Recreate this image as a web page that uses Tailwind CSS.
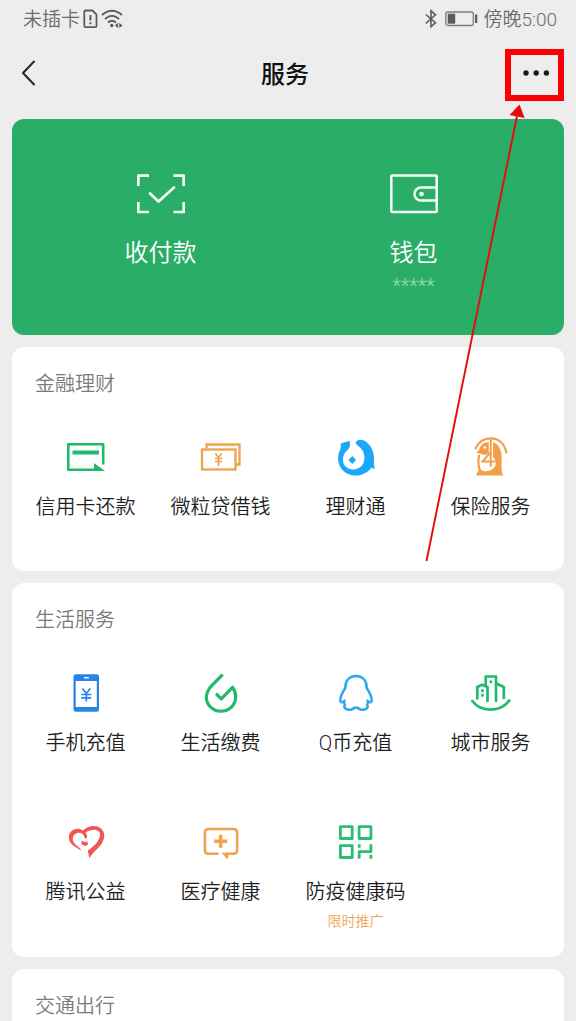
<!DOCTYPE html>
<html lang="zh-CN">
<head>
<meta charset="utf-8">
<meta name="viewport" content="width=device-width, initial-scale=1">
<title>服务</title>
<script src="https://cdn.jsdelivr.net/npm/@tailwindcss/browser@4"></script>
</head>
<body class="bg-[#ededed] font-[Roboto,'Noto_Sans_CJK_SC',sans-serif] text-[#1f1f1f]">
<div class="relative h-screen overflow-hidden">

  <!-- Status bar -->
  <div class="flex h-10 items-center justify-between pl-[23px] pr-[19px] text-[19px] leading-7 text-[#6b6b6b] font-[350]">
    <div class="flex items-center">
      <span>未插卡</span>
      <svg class="mb-[2px] ml-[3px] h-5 w-4" viewBox="0 0 16 20" fill="none" stroke="#5c5c5c" stroke-width="1.8" aria-hidden="true"><path d="M2.500 1.500H9.500L13.500 5.500V17Q13.500 18.200 12.300 18.200H2.500Q1.300 18.200 1.300 17V2.700Q1.300 1.500 2.500 1.500Z"/><path d="M7.400 6V11.500M7.400 13.200V15.200" stroke-width="2"/></svg>
      <svg class="mb-[2px] ml-[2px] h-5 w-6" viewBox="0 0 24 20" fill="none" stroke="#5c5c5c" stroke-width="1.900" aria-hidden="true"><path d="M1 6Q11-2.500 21 6M4 10Q11 3.500 18 10M7 13.500Q11 9.800 15 13.500"/><circle cx="10.800" cy="16.500" r="1.700" fill="#5c5c5c" stroke="none"/><path d="M17.200 13.800V19L13.800 16.400ZM18.300 13.800V19L21.600 16.400Z" fill="#5c5c5c" stroke="none"/></svg>
    </div>
    <div class="flex items-center">
      <svg class="mb-[2px] h-5 w-3" viewBox="0 0 12 20" fill="none" stroke="#5c5c5c" stroke-width="1.600" aria-hidden="true"><path d="M.8 5.500L10.500 13.700L6 17.800V1.700L10.500 5.800L.8 14.500"/></svg>
      <svg class="mb-[2px] ml-2 mr-1 h-5 w-[34px]" viewBox="0 0 34 20" aria-hidden="true"><rect x=".8" y="3" width="27.500" height="13.500" rx="2" fill="none" stroke="#7d7d7d" stroke-width="1.300"/><rect x="2.700" y="4.700" width="7.500" height="10" fill="#5c5c5c"/><rect x="30" y="5.500" width="2.200" height="8.500" fill="#5c5c5c"/></svg>
      <span>傍晚5:00</span>
    </div>
  </div>

  <!-- Navigation bar -->
  <header class="grid h-[70px] grid-cols-3 items-center pl-[6px] pr-3">
    <button type="button" aria-label="返回" class="flex h-10 w-10 items-center pl-[15px]">
      <svg class="mb-[2px] h-7 w-4" viewBox="0 0 16 28" fill="none" stroke="#262626" stroke-width="2" stroke-linecap="round" stroke-linejoin="round" aria-hidden="true"><path d="M13 1.500L2 13L13 24.500"/></svg>
    </button>
    <h1 class="text-center text-2xl font-medium text-[#111]">服务</h1>
    <button type="button" aria-label="更多" class="flex h-[52px] w-[59px] items-center justify-center justify-self-end border-[6px] border-[#fb0007]">
      <svg class="mb-1 ml-[2px] h-2 w-7" viewBox="0 0 28 8" fill="#1a1a1a" aria-hidden="true"><circle cx="4" cy="4" r="2.700"/><circle cx="14.200" cy="4" r="2.700"/><circle cx="24.400" cy="4" r="2.700"/></svg>
    </button>
  </header>

  <main class="mx-3 mt-[9px] flex flex-col gap-3">
    <!-- Payment card -->
    <section class="grid h-[216px] grid-cols-2 rounded-xl bg-[#2aae67] pl-[22px] pr-6 pt-[51px] font-[350] text-white">
      <a href="#" class="flex flex-col items-center">
        <svg class="size-12" viewBox="0 0 48 48" fill="none" stroke="#f2fff6" stroke-width="2.700" stroke-linejoin="round" aria-hidden="true"><path d="M1.300 16V5.700H12M36.500 5.700H46.700V16M46.700 32V42H36.500M12 42H1.300V32"/><path d="M13 23.500L21.500 31.500L37 17.500" stroke-linecap="round"/></svg>
        <span class="mt-[19px] text-2xl">收付款</span>
      </a>
      <a href="#" class="flex flex-col items-center">
        <svg class="size-12" viewBox="0 0 48 48" fill="none" stroke="#f2fff6" stroke-width="2.500" stroke-linejoin="round" aria-hidden="true"><rect x="1.300" y="5.500" width="45.400" height="36.500" rx="1"/><path d="M47 17.500H31A6.500 6.500 0 0 0 31 30.500H47"/><circle cx="31.500" cy="24" r="2.300" fill="#f2fff6" stroke="none"/></svg>
        <span class="mt-[19px] text-2xl">钱包</span>
        <span class="mt-[5px] text-xl leading-6 text-[#9adbb5]">*****</span>
      </a>
    </section>

    <!-- Finance -->
    <section class="rounded-xl bg-white px-[6px] pb-6 pt-[23px]">
      <h2 class="pl-[17px] text-xl font-[350] text-[#7a7a7a]">金融理财</h2>
      <div class="mt-[35px] grid grid-cols-4 gap-y-[35px] text-xl font-[350]">
        <a href="#" class="flex min-h-[114px] flex-col items-center">
          <svg class="size-12" viewBox="0 0 48 48" fill="none" stroke="#1fbb6b" stroke-width="2.600" aria-hidden="true"><path d="M32 36.700H6.300V11.300H41.200V31.500" stroke-linejoin="round"/><path d="M10.500 19.500H37" stroke-width="4"/><path d="M32 30L43 38H32Z" fill="#1fbb6b" stroke="none"/></svg>
          <span class="mt-3 whitespace-nowrap">信用卡还款</span>
        </a>
        <a href="#" class="flex min-h-[114px] flex-col items-center">
          <svg class="size-12" viewBox="0 0 48 48" fill="none" stroke="#eea24b" stroke-width="2.300" aria-hidden="true"><rect x="5" y="16.500" width="33.500" height="20"/><path d="M9.500 15V11.500H42.500V31.500H39"/><path d="M18.300 20.500L21.500 24.500L24.700 20.500M17.800 25.500H25.200M17.800 28.500H25.200M21.500 24.500V33" stroke-width="1.700"/></svg>
          <span class="mt-3 whitespace-nowrap">微粒贷借钱</span>
        </a>
        <a href="#" class="flex min-h-[114px] flex-col items-center">
          <svg class="size-12" viewBox="0 0 48 48" fill="#1ba7fb" aria-hidden="true"><path d="M17.500 7.700C14 9.500 11 8.700 8.500 11C9.300 13 9 15 8 17C5 23 5.500 31 10 36.500C15 42.500 24 44 31 41C35 39.500 38 37 39.500 34.500L42.800 36.500L41.800 31C43 24 41 15 36 10.500C32 6 25.500 5.500 23.700 9.500C24 12.500 28.500 13.500 30.500 17.500C33.500 23 33 29 29.500 33C25.500 37.500 17 37.500 13 33C9.800 29 10.500 22 14 18.500C17 16 19 13.500 17.500 7.700Z"/><path d="M20.300 23L24 27L20.300 31L16.500 27Z"/></svg>
          <span class="mt-3 whitespace-nowrap">理财通</span>
        </a>
        <a href="#" class="flex min-h-[114px] flex-col items-center">
          <svg class="size-12" viewBox="0 0 48 48" fill="none" stroke="#f1a047" stroke-width="2.200" stroke-linecap="round" aria-hidden="true"><path d="M8.500 15.500C11.500 8.500 17.500 5.300 24 5.300C32 5.300 37.500 11 39.500 19.500"/><path d="M8.500 19.500C11 18.500 12 17 13 14.500C15 10.500 18 9.300 21.800 9.300V19.500C20 22 16.500 22.800 13 20.500Z" fill="#f1a047" stroke="none"/><circle cx="17.800" cy="14.500" r="1.300" fill="#fff" stroke="none"/><path d="M26 9.300C31.500 11 35 17 34.700 25C34.600 32 34 37 36 42.500H9C10 39.500 11.500 38 12.500 36.300C17 39.500 25 38.500 28 33.500C29.500 30 29 27 26 24Z" fill="#f1a047" stroke="none"/><path d="M12 22.500C11.200 27 11.200 33 13 37.500"/><path d="M23.800 6V33M15 28.500H28M23.800 19L16 28" stroke-width="2"/></svg>
          <span class="mt-3 whitespace-nowrap">保险服务</span>
        </a>
      </div>
    </section>

    <!-- Daily life -->
    <section class="rounded-xl bg-white px-[6px] pb-6 pt-[23px]">
      <h2 class="pl-[17px] text-xl font-[350] text-[#7a7a7a]">生活服务</h2>
      <div class="mt-[35px] grid grid-cols-4 gap-y-[35px] text-xl font-[350]">
        <a href="#" class="flex min-h-[114px] flex-col items-center">
          <svg class="size-12" viewBox="0 0 48 48" fill="none" stroke="#2684e4" stroke-width="2" aria-hidden="true"><rect x="11.500" y="5.300" width="25.500" height="37.400" rx="2.500" fill="#2684e4" stroke="none"/><path d="M13.700 12H34.800V38H13.700Z" fill="#fff" stroke="none"/><path d="M22 8.700H26.800" stroke="#fff" stroke-width="1.500"/><path d="M20.300 19.500L24.300 24.500L28.300 19.500M19.300 25.500H29.300M19.300 28.800H29.300M24.300 24.500V32.500" stroke-width="1.700"/></svg>
          <span class="mt-3 whitespace-nowrap">手机充值</span>
        </a>
        <a href="#" class="flex min-h-[114px] flex-col items-center">
          <svg class="size-12" viewBox="0 0 48 48" fill="none" stroke="#1fbb6b" stroke-width="3.200" stroke-linejoin="round" aria-hidden="true"><path d="M25.500 5.500C19 13.500 9.300 19 9.300 28A14.700 14.200 0 0 0 38.700 28C38.700 24 37.500 21 35.500 18.300L24.300 29.800L19 24.700"/></svg>
          <span class="mt-3 whitespace-nowrap">生活缴费</span>
        </a>
        <a href="#" class="flex min-h-[114px] flex-col items-center">
          <svg class="size-12" viewBox="0 0 48 48" fill="none" stroke="#2ba7f1" stroke-width="2.500" stroke-linejoin="round" stroke-linecap="round" aria-hidden="true"><path d="M24 7C17 7 13.300 12 13.300 19C11 22.500 8.200 27 8.300 31C8.500 34 10.500 34 12.500 31.500M24 7C31 7 34.700 12 34.700 19C37 22.500 39.800 27 39.700 31C39.500 34 37.500 34 35.500 31.500M11.800 33C13 35 13.500 35.500 12.300 37.500C12.500 41.500 21 41.500 22 38.800H26C27 41.500 35.500 41.500 35.700 37.500C34.500 35.500 35 35 36.200 33"/></svg>
          <span class="mt-3 whitespace-nowrap">Q币充值</span>
        </a>
        <a href="#" class="flex min-h-[114px] flex-col items-center">
          <svg class="size-12" viewBox="0 0 48 48" fill="none" stroke="#1fbb6b" stroke-width="2.700" stroke-linecap="round" stroke-linejoin="round" aria-hidden="true"><path d="M5.300 32C14 43.500 33.500 43.500 42.300 31.500"/><path d="M10.300 29.500V18L15 15.700L20.500 18V32M18.700 15.500V7.500H29V32M29.500 14.500L36.800 18V29"/><path d="M23.900 12.700V13M15.500 21.500V22M15.500 26V26.500" stroke-width="2.800"/></svg>
          <span class="mt-3 whitespace-nowrap">城市服务</span>
        </a>
        <a href="#" class="flex min-h-[114px] flex-col items-center">
          <svg class="size-12" viewBox="0 2 48 48" fill="#f25555" aria-hidden="true"><path d="M19.500 34.500C13 31 6.500 27.500 6.800 21C7.200 14 15 10.500 21 14.500C26 9.500 34 8.500 39 12.500C44.500 17.500 42.500 25 37 31C33.500 35 30 37.500 27.300 42L25.800 34.500C31 31 36.500 26.500 38 20C39 14 32 11.500 23.500 16.500C25 18.500 25.500 20.500 24.700 22.500L22.500 22C22.500 18.500 19 16 15.500 17C10 18.500 9.500 24.500 13 28C15 30 18 31.500 19.500 34.500Z"/><path d="M19.500 24.500L22 26L25.500 25.700L26 28.500L23.500 30L19.500 28.500Z"/></svg>
          <span class="mt-3 whitespace-nowrap">腾讯公益</span>
        </a>
        <a href="#" class="flex min-h-[114px] flex-col items-center">
          <svg class="size-12" viewBox="0 2 48 48" fill="none" stroke="#eea24b" stroke-width="2.500" aria-hidden="true"><path d="M21.500 37.800H11.500Q7.900 37.800 7.900 34.200V16.500Q7.900 12.900 11.500 12.900H36.500Q40.100 12.900 40.100 16.500V34.200Q40.100 37.800 36.500 37.800H29"/><path d="M24.500 36.700H32L30.500 43.500Z" fill="#eea24b" stroke="none"/><path d="M17.200 25.300H30.200M23.700 18.800V31.800" stroke-width="3.500"/></svg>
          <span class="mt-3 whitespace-nowrap">医疗健康</span>
        </a>
        <a href="#" class="flex min-h-[114px] flex-col items-center">
          <svg class="size-12" viewBox="0 2 48 48" fill="none" stroke="#2cbd74" stroke-width="2.800" stroke-linejoin="round" aria-hidden="true"><rect x="8.400" y="10.700" width="11.800" height="11.800"/><rect x="27.100" y="10.700" width="11.800" height="11.800"/><rect x="8.400" y="29.700" width="11.800" height="11.800"/><path d="M27.200 28.300V31.700M38.900 28.300V35.700H27.200V42.700M38.900 38.700V42.700"/></svg>
          <span class="mt-3 whitespace-nowrap">防疫健康码</span>
          <span class="mt-[3px] text-sm leading-6 text-[#eba556]">限时推广</span>
        </a>
      </div>
    </section>

    <!-- Travel -->
    <section class="rounded-xl bg-white px-[6px] pb-6 pt-[23px]">
      <h2 class="pl-[17px] text-xl font-[350] text-[#7a7a7a]">交通出行</h2>
    </section>
  </main>

  <!-- Arrow pointing at the menu button -->
  <svg class="pointer-events-none absolute right-[46px] top-[104px] h-[460px] w-[110px]" viewBox="0 0 110 460" aria-hidden="true"><path d="M6.500 457L97 12" stroke="#e60a10" stroke-width="1.900"/><path d="M99.500 .5L104.700 14L89.500 11Z" fill="#e60a10"/></svg>
</div>
</body>
</html>
